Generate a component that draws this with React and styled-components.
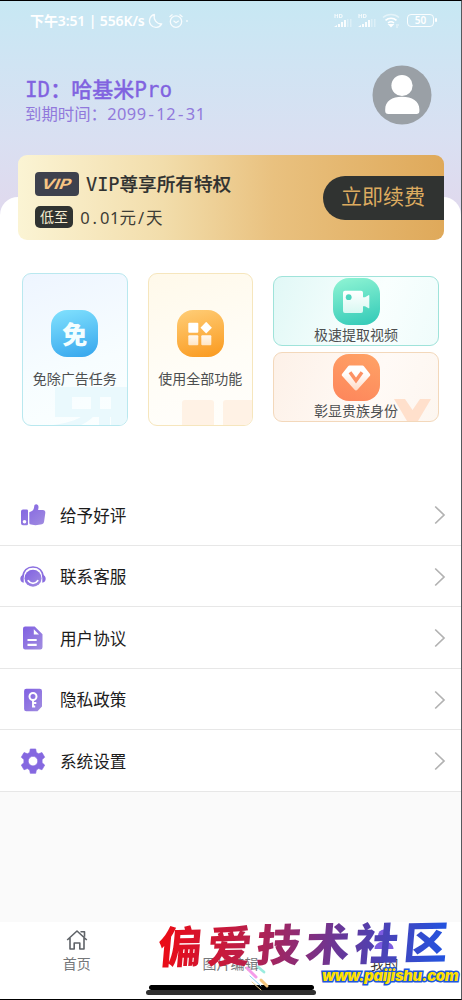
import React from 'react';
import styled, { createGlobalStyle } from 'styled-components';

const ROWS = [
  { label: '给予好评', Icon: ThumbIcon },
  { label: '联系客服', Icon: ServiceIcon },
  { label: '用户协议', Icon: DocIcon },
  { label: '隐私政策', Icon: KeyIcon },
  { label: '系统设置', Icon: GearIcon },
];

function Purple({ id }) {
  return (
    <defs>
      <linearGradient id={id} x1="0" y1="0" x2="1" y2="1">
        <stop offset="0" stopColor="#8060e2" />
        <stop offset="1" stopColor="#a18de0" />
      </linearGradient>
    </defs>
  );
}

function ThumbIcon() {
  return (
    <svg width="26" height="24" viewBox="0 0 26 24">
      <Purple id="thumb" />
      <path
        d="M3 6.500h3.800a1.200 1.200 0 0 1 1.200 1.200v13.300a1.200 1.200 0 0 1-1.200 1.200H3a2 2 0 0 1-2-2V8.500a2 2 0 0 1 2-2zM9.300 9.200c3-.8 4.900-2.700 4.900-5.600 0-3.400 4.800-3.100 4.300 1.100l-.4 2.300h4.800c1.800 0 2.600 1.200 2.400 3l-1.200 8.400c-.4 2.200-1.500 3-3.600 3l-5 .8-4.500-.8c-1.300 0-1.700-.8-1.700-2z"
        fill="url(#thumb)"
      />
      <circle cx="4.500" cy="18.800" r="1.800" fill="#fff" />
    </svg>
  );
}

function ServiceIcon() {
  return (
    <svg width="26" height="24" viewBox="0 0 26 24">
      <Purple id="service" />
      <path d="M2.800 12.500C3.200 5.500 7.500 2 13 2s9.800 3.500 10.200 10.500" fill="none" stroke="#8b6fe0" strokeWidth="1.700" />
      <path d="M3.700 9.800v8C1.600 17.600.3 16 .3 13.800s1.300-3.800 3.400-4zM22.300 9.800v8c2.100-.2 3.400-1.800 3.400-4s-1.300-3.800-3.400-4z" fill="#8a6de0" />
      <circle cx="13" cy="13.200" r="8.500" fill="url(#service)" />
      <path d="M8.300 15.800c2.500 3.400 6.900 3.400 9.400 0" fill="none" stroke="#fff" strokeWidth="1.800" strokeLinecap="round" />
    </svg>
  );
}

function DocIcon() {
  return (
    <svg width="26" height="24" viewBox="0 0 26 24">
      <Purple id="doc" />
      <path d="M5.200.5h9.500l7.800 7.800v12.900a2.200 2.200 0 0 1-2.200 2.200H5.200A2.200 2.200 0 0 1 3 21.200V2.700A2.200 2.200 0 0 1 5.200.5z" fill="url(#doc)" />
      <path d="M13.800 3.200v5.300h5.200z" fill="#fff" />
      <path d="M7.500 14h9.200M7.500 18.800h9.200" stroke="#fff" strokeWidth="2.200" />
    </svg>
  );
}

function KeyIcon() {
  return (
    <svg width="26" height="24" viewBox="0 0 26 24">
      <Purple id="key" />
      <path d="M6.300.8h13.500a2.200 2.200 0 0 1 2.200 2.200v15.600l-4.500 4.600H6.300a2.200 2.200 0 0 1-2.200-2.200V3A2.200 2.200 0 0 1 6.300.8z" fill="url(#key)" />
      <circle cx="13" cy="8.500" r="3.500" fill="none" stroke="#fff" strokeWidth="2" />
      <path d="M13 12v7.500M13 15h3.300M13 18.500h2.200" fill="none" stroke="#fff" strokeWidth="1.900" />
    </svg>
  );
}

function GearIcon() {
  return (
    <svg width="26" height="26" viewBox="0 0 24 24">
      <path
        fillRule="evenodd"
        fill="#8568e0"
        stroke="#8568e0"
        strokeWidth=".6"
        strokeLinejoin="round"
        d="M9.500.9h5l.6 3.200 2.100 1.200 3.100-1.100 2.500 4.300-2.400 2.200v2.900l2.400 2.200-2.500 4.300-3.100-1.100-2.100 1.200-.6 3.200h-5l-.6-3.200-2.100-1.200-3.100 1.100-2.500-4.300 2.400-2.200v-2.900L1.200 8.500l2.500-4.300 3.100 1.100 2.100-1.200zM12 7.700a4.400 4.400 0 1 0 0 8.800 4.400 4.400 0 0 0 0-8.800z"
      />
    </svg>
  );
}

function Signal() {
  return (
    <SignalBox>
      <b>HD</b>
      <svg width="18" height="8" viewBox="0 0 18 8">
        <path d="M0 8L3 6v2zM4 5h2v3H4zM7 3h2v5H7zM10 1h2v7h-2z" fill="#fff" fillOpacity=".9" />
        <path d="M13 0h1.500v8H13zM16 0h1.500v8H16z" fill="#fff" fillOpacity=".35" />
      </svg>
    </SignalBox>
  );
}

// every latin character takes the same cell, wide characters keep their own width
function Mono({ children }) {
  return [...children].map((ch, i) =>
    ch.charCodeAt(0) < 128 ? (
      <Cell key={i} $slab={/[A-Za-z-]/.test(ch)}>{ch}</Cell>
    ) : (
      <React.Fragment key={i}>{ch}</React.Fragment>
    )
  );
}

const App = () => {
  return (
    <>
      <GlobalStyle />
      <Phone>
        <Header>
          <StatusBar>
            <Clock>下午3:51 | 556K/s</Clock>
            <svg width="46" height="16" viewBox="0 0 46 16" fill="none" stroke="#fff" strokeOpacity=".85" strokeWidth="1.300">
              <path d="M7.500 1.500a6.500 6.500 0 1 0 7.200 9.400A7.200 7.200 0 0 1 7.500 1.500z" strokeLinejoin="round" />
              <circle cx="29" cy="8.600" r="5.700" />
              <path d="M26.500 7.800l2.500 2 2.800-2M22.500 4l3-2.600M35.500 4l-3-2.600" />
              <circle cx="40" cy="8" r=".3" />
            </svg>
            <StatusRight>
              <Signal />
              <Signal />
              <svg width="19" height="15" viewBox="0 0 19 15" fill="none" stroke="#fff" strokeWidth="1.600">
                <path d="M1 4.500c4.500-4 11.500-4 16 0" strokeOpacity=".5" />
                <path d="M3.500 7.300c3.200-2.800 7.800-2.800 11 0M6 10c1.800-1.500 4.200-1.500 6 0" />
                <path d="M7.500 11.800L9 13.300l1.500-1.500z" fill="#fff" />
                <path d="M14 12h3M14 14h2" strokeOpacity=".7" strokeWidth="1" />
              </svg>
              <Battery>50</Battery>
            </StatusRight>
          </StatusBar>
          <Profile>
            <div>
              <UserName><Mono>ID：哈基米Pro</Mono></UserName>
              <Expires><Mono>到期时间：2099-12-31</Mono></Expires>
            </div>
            <svg width="60" height="60" viewBox="0 0 60 60">
              <circle cx="30" cy="30" r="29.500" fill="#9aa0a6" />
              <circle cx="30" cy="20.500" r="10.600" fill="#fff" />
              <path d="M13.200 46v-1.500C13.200 36 20 31.800 30 31.800S47.400 36 47.400 44.500V46c0 2-1 3-3 3h-28c-2.200 0-3.200-1-3.200-3z" fill="#fff" />
            </svg>
          </Profile>
        </Header>
        <Sheet>
          <VipBanner>
            <div>
              <BannerLine>
                <VipTag><span>VIP</span></VipTag>
                <VipTitle><Mono>VIP尊享所有特权</Mono></VipTitle>
              </BannerLine>
              <PriceLine>
                <LowTag>低至</LowTag>
                <Price><Mono>0.01元/天</Mono></Price>
              </PriceLine>
            </div>
            <RenewButton>立即续费</RenewButton>
          </VipBanner>
          <Features>
            <TallCard $border="#b9e8ef" $bg="linear-gradient(160deg, #eef5ff, #f7fdff 60%, #fbffff)">
              <GhostArt width="74" height="80" viewBox="0 0 74 80">
                <path d="M2 42h72v10H2zM2 52h17v12H2zM38 52h9v12h-9zM2 64h58v8H2zM58 52h16v28H58z" fill="#eaf9fd" />
                <path d="M22 64h14c-4 7-13 13-36 16v0h28c9-4 14-9 17-16h1v16h11V64z" fill="#eaf9fd" />
              </GhostArt>
              <IconTile $bg="linear-gradient(165deg, #82e2fe, #35a5ed)"><FreeMark>免</FreeMark></IconTile>
              <FeatureName>免除广告任务</FeatureName>
            </TallCard>
            <TallCard $border="#f6e6bd" $bg="linear-gradient(160deg, #fff9ea, #fffdf7 60%, #fffefb)">
              <GhostArt width="72" height="52" viewBox="0 0 72 52" fill="#fff2e5">
                <rect x="2" y="27" width="32" height="40" rx="3" />
                <rect x="43" y="27" width="34" height="40" rx="3" />
              </GhostArt>
              <IconTile $bg="linear-gradient(165deg, #ffce78, #fa991d)">
                <svg width="24" height="24" viewBox="0 0 24 24">
                  <defs>
                    <linearGradient id="grid" x1="0" y1="0" x2="0" y2="24" gradientUnits="userSpaceOnUse">
                      <stop offset=".4" stopColor="#fff" />
                      <stop offset="1" stopColor="#ffe4c0" />
                    </linearGradient>
                  </defs>
                  <g fill="url(#grid)">
                    <rect x=".3" y=".8" width="10" height="10" rx="1" />
                    <rect x=".3" y="13.300" width="10" height="10" rx="1" />
                    <rect x="13.300" y="13.300" width="10" height="10" rx="1" />
                    <path d="M18.200-.2l5.700 5.900-5.700 5.900-5.700-5.900z" />
                  </g>
                </svg>
              </IconTile>
              <FeatureName>使用全部功能</FeatureName>
            </TallCard>
            <CardStack>
              <WideCard $border="#9fe3da" $bg="linear-gradient(110deg, #e1f8f6, #f9fffe 60%, #effcfb)">
                <IconTile $bg="linear-gradient(165deg, #91f5d4, #30c9b7)">
                  <svg width="28" height="24" viewBox="0 0 28 24">
                    <defs>
                      <linearGradient id="cam" x1="0" y1="0" x2="0" y2="1">
                        <stop offset="0" stopColor="#fff" />
                        <stop offset="1" stopColor="#d8f8f2" />
                      </linearGradient>
                    </defs>
                    <path d="M3 .8h16a2 2 0 0 1 2 2v4.400h2l3.500-2c.5-.2.800 0 .8.500v12c0 .5-.3.700-.8.500l-3.500-2h-2v4.700a2 2 0 0 1-2 2H3a2 2 0 0 1-2-2V2.800a2 2 0 0 1 2-2z" fill="url(#cam)" />
                    <circle cx="6.700" cy="7.200" r="2.900" fill="#4dd5be" />
                  </svg>
                </IconTile>
                <FeatureName>极速提取视频</FeatureName>
              </WideCard>
              <WideCard $border="#f3d8bb" $bg="linear-gradient(110deg, #fdf1e8, #fffaf6 60%, #fdf6f0)">
                <GhostArt width="45" height="22" viewBox="0 0 45 22">
                  <path d="M1 0h11l7.500 11L27 0h11L25 22H14z" fill="#ffe0cc" />
                </GhostArt>
                <IconTile $bg="linear-gradient(20deg, #fd855b, #ffa366)">
                  <svg width="30" height="26" viewBox="0 0 30 26">
                    <defs>
                      <linearGradient id="gem" x1="0" y1="0" x2="0" y2="1">
                        <stop offset=".3" stopColor="#fff" />
                        <stop offset="1" stopColor="#ffd9c4" />
                      </linearGradient>
                    </defs>
                    <path d="M8.500.5h13c.6 0 1 .2 1.400.7l5.900 7.500c.6.800.6 1.500 0 2.200L16.400 24.800c-.9 1-1.900 1-2.800 0L1.200 10.900c-.6-.7-.6-1.400 0-2.200l5.900-7.500c.4-.5.800-.7 1.400-.7z" fill="url(#gem)" />
                    <path d="M9 7.200l6 8.300 6-8.300" fill="none" stroke="#fd9265" strokeWidth="3.400" />
                  </svg>
                </IconTile>
                <FeatureName>彰显贵族身份</FeatureName>
              </WideCard>
            </CardStack>
          </Features>
        </Sheet>
        <Menu>
          {ROWS.map(({ label, Icon }) => (
            <MenuRow key={label}>
              <Icon />
              <MenuLabel>{label}</MenuLabel>
              <svg width="14" height="20" viewBox="0 0 14 20">
                <path d="M2.200 1.500l8.800 8.500-8.800 8.500" fill="none" stroke="#b2b2b2" strokeWidth="1.700" />
              </svg>
            </MenuRow>
          ))}
        </Menu>
        <TabBar>
          <Tab>
            <svg width="22" height="22" viewBox="0 0 22 22" fill="none" stroke="#5f6368" strokeWidth="1.600" strokeLinejoin="round">
              <path d="M1.200 11L11 2l9.800 9M4 9v11h4.200v-6h5.600v6H18V9M14.500 2.700h4v5" />
            </svg>
            首页
          </Tab>
          <Tab>
            <svg width="22" height="22" viewBox="0 0 22 22" fill="none" stroke="#5f6368" strokeWidth="1.600">
              <path d="M1.500 3v8" />
            </svg>
            图片编辑
          </Tab>
          <Tab $active>
            <svg width="22" height="22" viewBox="0 0 22 22" fill="#7c5ce0">
              <circle cx="11" cy="6.500" r="6" />
              <path d="M1.500 20c0-10 19-10 19 0z" />
            </svg>
            我的
          </Tab>
        </TabBar>
        <HomeBar $w="170px" $bottom="4px" $left="146px" $color="#303030" />
        <HomeBar $w="165px" $bottom="9px" $left="149px" $color="#000" />
        <Watermark>偏爱技术社区</Watermark>
        <Brush width="28" height="28" viewBox="0 0 28 28" strokeLinecap="round">
          <path d="M4 5l9 9" stroke="#f49be8" strokeWidth="3" />
          <path d="M15 4l6 5" stroke="#9becdf" strokeWidth="2.800" />
          <path d="M18 17l6 6" stroke="#f5c77e" strokeWidth="3" />
          <path d="M7 13l11 10" stroke="#8dd2f5" strokeWidth="1" />
          <path d="M9 19l9 8" stroke="#e9cf8b" strokeWidth="1" />
        </Brush>
        <WatermarkUrl>www.paijishu.com</WatermarkUrl>
      </Phone>
    </>
  );
};

export default App;

const GlobalStyle = createGlobalStyle`
  body {
    margin: 0;
    font-family: 'Noto Sans', 'Noto Sans CJK SC', sans-serif;
  }
  * {
    box-sizing: border-box;
  }
  svg {
    display: block;
    flex-shrink: 0;
  }
`;

const Phone = styled.div`
  position: relative;
  display: flex;
  flex-direction: column;
  width: 462px;
  height: 1000px;
  overflow: hidden;
  background: #fafafa;
  border-top: 1px solid #000;
  border-right: 1px solid #55595d;
  border-bottom: 1px solid #000;
`;

const Header = styled.div`
  flex: none;
  height: 226px;
  background: linear-gradient(#c7e8f3, #d0e4f3 28%, #d9e0f2 60%, #dfdaee 88%);
`;

const StatusBar = styled.div`
  display: flex;
  align-items: center;
  height: 39px;
  padding: 0 25px 0 30px;
`;

const Clock = styled.div`
  width: 117px;
  color: #fff;
  font: 600 14px/20px 'Noto Sans', 'Noto Sans CJK SC', sans-serif;
  letter-spacing: -0.12px;
  white-space: nowrap;
`;

const StatusRight = styled.div`
  display: flex;
  align-items: center;
  gap: 6px;
  margin-left: auto;
`;

const SignalBox = styled.div`
  width: 18px;
  b {
    display: block;
    color: #fff;
    opacity: 0.85;
    font-size: 6px;
    line-height: 5px;
  }
`;

const Battery = styled.div`
  position: relative;
  width: 27px;
  height: 13px;
  margin: 0 2px 0 0;
  border: 1.500px solid rgba(255, 255, 255, 0.9);
  border-radius: 4px;
  color: #fff;
  font: 600 10px/11px 'Noto Sans', sans-serif;
  text-align: center;
  &::after {
    content: '';
    position: absolute;
    right: -4px;
    top: 3px;
    width: 2px;
    height: 4px;
    border-radius: 1px;
    background: #fff;
  }
`;

const Profile = styled.div`
  display: flex;
  justify-content: space-between;
  padding: 25px 29px 0 25px;
`;

const Cell = styled.span`
  display: inline-block;
  width: 0.6em;
  text-align: center;
  line-height: 1;
  font-family: ${(p) => (p.$slab ? "'DejaVu Sans Mono', monospace" : 'inherit')};
`;

const UserName = styled.div`
  margin-top: 10px;
  color: #8163e0;
  font-size: 21px;
  font-weight: 500;
  line-height: 28px;
  white-space: nowrap;
  -webkit-text-stroke: 0.300px #8163e0;
`;

const Expires = styled.div`
  color: #9179dc;
  font-size: 16.400px;
  line-height: 22px;
  white-space: nowrap;
`;

const Sheet = styled.div`
  flex: none;
  height: 286px;
  margin-top: -30px;
  background: #fff;
  border-radius: 18px 18px 0 0;
`;

const VipBanner = styled.div`
  display: flex;
  justify-content: space-between;
  height: 85px;
  margin: -42px 17px 0 18px;
  padding: 17px 0 0 17px;
  border-radius: 9px;
  background: linear-gradient(90deg, #fbf4d4, #f2ddab 34%, #e9c17f 60%, #dfa95a);
`;

const BannerLine = styled.div`
  display: flex;
  align-items: center;
  gap: 7px;
  height: 24px;
`;

const PriceLine = styled(BannerLine)`
  margin-top: 9px;
`;

const VipTag = styled.div`
  display: flex;
  align-items: center;
  justify-content: center;
  width: 44px;
  height: 24px;
  border-radius: 4px;
  background: #3e414d;
  span {
    color: #f7c583;
    font: 700 14px/24px Inter, 'Noto Sans', sans-serif;
    transform: scaleX(1.250) skewX(-18deg);
  }
`;

const VipTitle = styled.div`
  color: #2f3130;
  font-size: 18.600px;
  font-weight: 500;
  line-height: 22px;
  white-space: nowrap;
  -webkit-text-stroke: 0.200px #2f3130;
`;

const LowTag = styled.div`
  width: 38px;
  height: 22px;
  border-radius: 5px;
  background: #303331;
  color: #f8eed2;
  font-size: 14px;
  line-height: 21px;
  text-align: center;
`;

const Price = styled.div`
  padding-top: 2px;
  color: #3d3c35;
  font-size: 16.500px;
  line-height: 24px;
`;

const RenewButton = styled.div`
  width: 121px;
  height: 44px;
  margin-top: 4px;
  padding-left: 18px;
  border-radius: 22px 0 0 22px;
  background: #303331;
  color: #dcab60;
  font-size: 21px;
  line-height: 41px;
`;

const Features = styled.div`
  display: flex;
  padding: 33px 22px 0;
`;

const TallCard = styled.div`
  position: relative;
  display: flex;
  flex-direction: column;
  align-items: center;
  width: 106px;
  height: 153px;
  margin-right: 20px;
  padding-top: 36px;
  overflow: hidden;
  border: 1px solid ${(p) => p.$border};
  border-radius: 9px;
  background: ${(p) => p.$bg};
`;

const CardStack = styled.div`
  display: flex;
  flex-direction: column;
  gap: 6px;
  padding-top: 3px;
`;

const WideCard = styled.div`
  position: relative;
  display: flex;
  flex-direction: column;
  align-items: center;
  width: 166px;
  height: 70px;
  padding-top: 1px;
  overflow: hidden;
  border: 1px solid ${(p) => p.$border};
  border-radius: 9px;
  background: ${(p) => p.$bg};
`;

const IconTile = styled.div`
  position: relative;
  display: flex;
  flex: none;
  align-items: center;
  justify-content: center;
  width: 47px;
  height: 47px;
  border-radius: 16px;
  background: ${(p) => p.$bg};
`;

const FreeMark = styled.span`
  color: #f3feff;
  font: 900 25px/47px 'Noto Sans CJK SC', sans-serif;
`;

const FeatureName = styled.div`
  position: relative;
  color: #4d4f50;
  font-size: 14px;
  line-height: 19px;
  white-space: nowrap;
  ${TallCard} & {
    margin-top: 12px;
  }
`;

const GhostArt = styled.svg`
  position: absolute;
  right: 0;
  bottom: 0;
`;

const Menu = styled.div`
  flex: none;
  padding-top: 1px;
  background: #fff;
`;

const MenuRow = styled.div`
  display: flex;
  align-items: center;
  height: 61.500px;
  padding: 2px 14px 0 20px;
  border-bottom: 1.500px solid #e7e7e7;
`;

const MenuLabel = styled.div`
  flex: 1;
  padding: 1px 0 0 14px;
  color: #1c1c1c;
  font-size: 16.600px;
  line-height: 24px;
`;

const TabBar = styled.div`
  display: flex;
  height: 77px;
  margin-top: auto;
  background: #fff;
`;

const Tab = styled.div`
  display: flex;
  flex: 1;
  flex-direction: column;
  align-items: center;
  padding-top: 7px;
  color: ${(p) => (p.$active ? '#3a3a3a' : '#75777a')};
  font-size: 14px;
  line-height: 26px;
`;

const HomeBar = styled.div`
  position: absolute;
  left: ${(p) => p.$left};
  bottom: ${(p) => p.$bottom};
  width: ${(p) => p.$w};
  height: 5px;
  border-radius: 3px;
  background: ${(p) => p.$color};
`;

const Brush = styled.svg`
  position: absolute;
  left: 243px;
  top: 962px;
`;

const Watermark = styled.div`
  position: absolute;
  left: 153px;
  top: 911px;
  padding: 0 6px;
  color: transparent;
  background: linear-gradient(90deg, #f00a10, #b81f4c 32%, #65389b 62%, #1a56e8);
  background-clip: text;
  font: 900 44px/60px 'Noto Sans CJK SC', sans-serif;
  letter-spacing: 5px;
  white-space: nowrap;
  transform: skewX(-5deg) skewY(-1deg);
`;

const WatermarkUrl = styled.div`
  position: absolute;
  left: 322px;
  top: 965px;
  color: #ffe000;
  font: italic 900 14.800px/20px Inter, sans-serif;
  letter-spacing: -0.300px;
  paint-order: stroke fill;
  -webkit-text-stroke: 3px #1c56dc;
  white-space: nowrap;
`;
